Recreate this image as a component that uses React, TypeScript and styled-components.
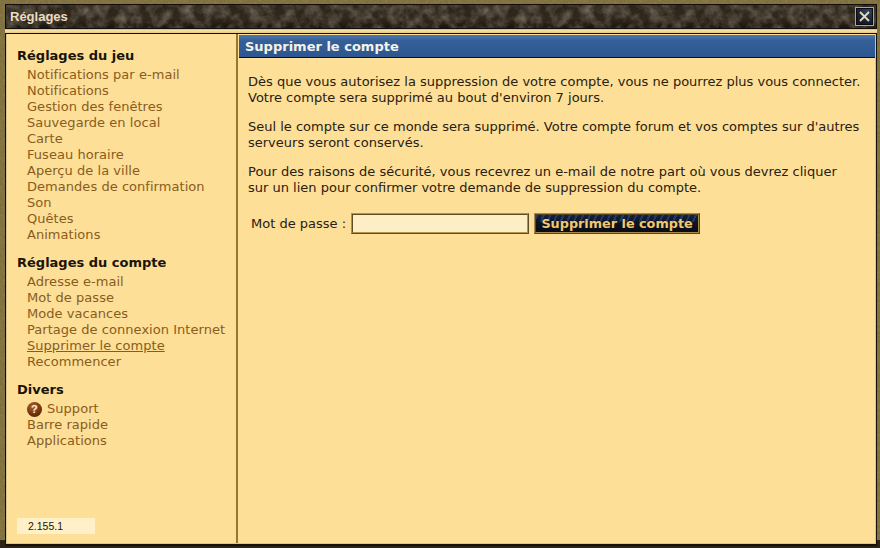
import React from "react";
import styled, { createGlobalStyle } from "styled-components";

const noise = (freq: number, matrix: string) =>
  `url("data:image/svg+xml,${encodeURIComponent(
    `<svg xmlns='http://www.w3.org/2000/svg' width='400' height='200'><filter id='n'><feTurbulence type='fractalNoise' baseFrequency='${freq}' numOctaves='4' seed='7'/><feColorMatrix values='${matrix}'/></filter><rect width='400' height='200' filter='url(#n)'/></svg>`
  )}")`;

// gold and olive mottling round the window, smoky brown in the title bar
const frameTexture = noise(0.35, "0 0 0 0 0.2 0 0 0 0 0.15 0 0 0 0 0.05 1.6 0 0 0 -0.3");
const barTexture = noise(0.09, "0 0 0 0 0.36 0 0 0 0 0.3 0 0 0 0 0.22 1.1 0 0 0 -0.4");

const GlobalStyle = createGlobalStyle`
  html, body {
    margin: 0;
    padding: 0;
    width: 880px;
    height: 548px;
    overflow: hidden;
    background: #2b2013;
  }
`;

const WindowFrame = styled.div`
  box-sizing: border-box;
  width: 880px;
  height: 548px;
  padding: 4px 3px 2px 5px;
  display: flex;
  flex-direction: column;
  background:
    linear-gradient(180deg, transparent 0 540px, #2e2414 540px),
    ${frameTexture},
    #8a7a44;
  font-family: "DejaVu Sans", Verdana, sans-serif;
`;

const TitleBar = styled.div`
  box-sizing: border-box;
  height: 25px;
  flex: none;
  display: flex;
  align-items: center;
  justify-content: space-between;
  padding: 0 2px 0 4px;
  border: 1px solid #120d07;
  background:
    ${barTexture},
    linear-gradient(180deg, #2c251b 0%, #30281d 60%, #1a150f 100%);
`;

const Title = styled.span`
  font-family: "Liberation Sans", Arial, sans-serif;
  font-size: 13px;
  font-weight: bold;
  color: #e8dcc0;
`;

const CloseButton = styled.div`
  box-sizing: border-box;
  width: 19px;
  height: 19px;
  display: flex;
  align-items: center;
  justify-content: center;
  border: 1px solid #b9a576;
  outline: 1px solid #0c0c10;
  outline-offset: -2px;
  background: radial-gradient(circle at 70% 20%, #2d4468, #141b2b 70%);
`;

const GoldStrip = styled.div`
  box-sizing: border-box;
  height: 5px;
  flex: none;
  background: linear-gradient(180deg, #d8b868 0%, #f6e2a8 40%, #e6c87e 100%);
  border-bottom: 1px solid #14100a;
`;

const Body = styled.div`
  flex: 1;
  min-height: 0;
  display: flex;
  padding: 0 1px 1px;
  background: #fddf98;
  border: 1px solid #14100a;
  border-top: 0;
  border-bottom-width: 2px;
  box-shadow: inset 1px 0 #d8c48f, inset -1px 0 #d8c48f, inset 0 -1px #d8c48f;
`;

const Sidebar = styled.nav`
  box-sizing: border-box;
  width: 231px;
  flex: none;
  padding: 14px 0 0 10px;
  position: relative;
  display: flex;
  flex-direction: column;
  border-right: 2px solid #9a7433;
`;

const Section = styled.div`
  margin-bottom: 12px;
`;

const SectionTitle = styled.div`
  font-size: 13px;
  font-weight: bold;
  line-height: 16px;
  color: #1a1408;
  margin-bottom: 3px;
`;

const NavLink = styled.div<{ $active?: boolean }>`
  display: flex;
  align-items: center;
  gap: 5px;
  height: 16px;
  padding-left: 10px;
  font-size: 13px;
  line-height: 16px;
  letter-spacing: 0.04px;
  color: #8a5c1c;
  text-decoration: ${({ $active }) => ($active ? "underline" : "none")};
`;

const HelpIcon = styled.span`
  width: 15px;
  height: 15px;
  flex: none;
  border-radius: 50%;
  display: flex;
  align-items: center;
  justify-content: center;
  background: radial-gradient(circle at 40% 30%, #b0602a, #5c2608 75%);
  color: #fff3dc;
  font-family: "Liberation Sans", Arial, sans-serif;
  font-size: 11px;
  font-weight: bold;
`;

const Version = styled.div`
  position: absolute;
  left: 10px;
  bottom: 9px;
  box-sizing: border-box;
  width: 78px;
  height: 16px;
  padding-left: 11px;
  background: #fff0c8;
  font-family: "Liberation Sans", Arial, sans-serif;
  font-size: 10.5px;
  line-height: 16px;
  color: #1c1508;
`;

const Main = styled.main`
  flex: 1;
  min-width: 0;
  padding: 1px 0 0 1px;
`;

const MainHeader = styled.h2`
  margin: 0;
  box-sizing: border-box;
  height: 23px;
  padding-left: 6px;
  font-size: 13px;
  font-weight: bold;
  line-height: 24px;
  color: #f6f3e4;
  background: linear-gradient(180deg, #4e78ac 0%, #35609a 25%, #2d5690 100%);
  border-bottom: 1px solid #14100a;
`;

const Content = styled.div`
  padding: 16px 8px 0 9px;
`;

const Paragraph = styled.p`
  margin: 0 0 13px;
  font-size: 13px;
  line-height: 16px;
  color: #2a2010;
`;

const FormRow = styled.div`
  display: flex;
  align-items: center;
  margin-top: 17px;
  padding-left: 3px;
`;

const Label = styled.label`
  font-size: 13px;
  color: #2a2010;
  margin-right: 5px;
`;

const PasswordInput = styled.input`
  box-sizing: border-box;
  width: 178px;
  height: 21px;
  margin-right: 5px;
  padding: 0 4px;
  background: #feeec6;
  border: 2px ridge #b3914e;
  outline: none;
`;

const SubmitButton = styled.button`
  box-sizing: border-box;
  width: 166px;
  height: 21px;
  padding: 0;
  background:
    repeating-linear-gradient(115deg, rgba(60, 100, 170, 0.4) 0 2px, transparent 2px 6px) top / 100% 7px no-repeat,
    linear-gradient(180deg, #14233f 0%, #0d1423 40%, #090c15 100%);
  border: 2px ridge #a98a4a;
  font-family: "DejaVu Sans", Verdana, sans-serif;
  font-size: 12.8px;
  font-weight: bold;
  line-height: 15px;
  color: #f2c76e;
`;

const gameSettings = [
  "Notifications par e-mail",
  "Notifications",
  "Gestion des fenêtres",
  "Sauvegarde en local",
  "Carte",
  "Fuseau horaire",
  "Aperçu de la ville",
  "Demandes de confirmation",
  "Son",
  "Quêtes",
  "Animations",
];

const accountSettings = [
  "Adresse e-mail",
  "Mot de passe",
  "Mode vacances",
  "Partage de connexion Internet",
  "Supprimer le compte",
  "Recommencer",
];

export default function App() {
  return (
    <>
      <GlobalStyle />
      <WindowFrame>
        <TitleBar>
          <Title>Réglages</Title>
          <CloseButton>
            <svg width="11" height="11" viewBox="0 0 11 11">
              <path d="M1 1 L10 10 M10 1 L1 10" stroke="#f0d9a4" strokeWidth="1.8" />
            </svg>
          </CloseButton>
        </TitleBar>
        <GoldStrip />
        <Body>
          <Sidebar>
            <Section>
              <SectionTitle>Réglages du jeu</SectionTitle>
              {gameSettings.map((item) => (
                <NavLink key={item}>{item}</NavLink>
              ))}
            </Section>
            <Section>
              <SectionTitle>Réglages du compte</SectionTitle>
              {accountSettings.map((item) => (
                <NavLink key={item} $active={item === "Supprimer le compte"}>
                  {item}
                </NavLink>
              ))}
            </Section>
            <Section>
              <SectionTitle>Divers</SectionTitle>
              <NavLink>
                <HelpIcon>?</HelpIcon>
                Support
              </NavLink>
              <NavLink>Barre rapide</NavLink>
              <NavLink>Applications</NavLink>
            </Section>
            <Version>2.155.1</Version>
          </Sidebar>
          <Main>
            <MainHeader>Supprimer le compte</MainHeader>
            <Content>
              <Paragraph>
                Dès que vous autorisez la suppression de votre compte, vous ne pourrez plus vous connecter.
                <br />
                Votre compte sera supprimé au bout d'environ 7 jours.
              </Paragraph>
              <Paragraph>
                Seul le compte sur ce monde sera supprimé. Votre compte forum et vos comptes sur d'autres
                <br />
                serveurs seront conservés.
              </Paragraph>
              <Paragraph>
                Pour des raisons de sécurité, vous recevrez un e-mail de notre part où vous devrez cliquer
                <br />
                sur un lien pour confirmer votre demande de suppression du compte.
              </Paragraph>
              <FormRow>
                <Label>Mot de passe :</Label>
                <PasswordInput type="password" />
                <SubmitButton>Supprimer le compte</SubmitButton>
              </FormRow>
            </Content>
          </Main>
        </Body>
      </WindowFrame>
    </>
  );
}
